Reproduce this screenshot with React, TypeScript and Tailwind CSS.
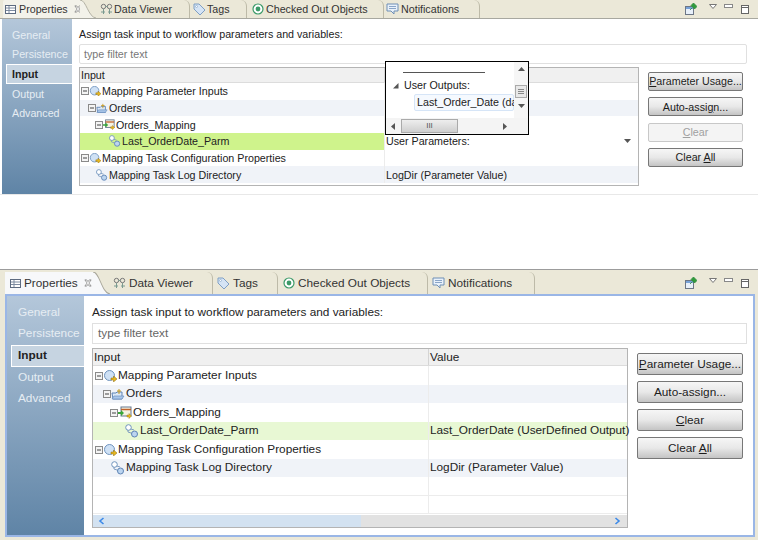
import React from 'react';

const font = { fontFamily: '"Liberation Sans", "Noto Sans", sans-serif' };

// small drawn icons
const Toggle = () => (
  <svg width="8" height="8" viewBox="0 0 8 8" className="flex-shrink-0">
    <rect x="0.5" y="0.5" width="7" height="7" fill="#f4f4f4" stroke="#8a8a8a" />
    <path d="M2 4h4" stroke="#444" />
  </svg>
);

const GroupIcon = () => (
  <svg viewBox="0 0 14 12" className="w-full h-auto">
    <circle cx="6.5" cy="5.5" r="5" fill="#cfe1f5" stroke="#6f93bd" />
    <path d="M8 8h2.5V6l3.5 3-3.5 3v-2H8z" fill="#e8b820" stroke="#8a6a10" strokeWidth="0.5" />
  </svg>
);

const FolderIcon = () => (
  <svg viewBox="0 0 14 12" className="w-full h-auto">
    <path d="M1 5h4l1-1h5v7H2z" fill="#dbe8f7" stroke="#5e84b5" />
    <path d="M8 1v5M6 3h4" stroke="#c79a20" />
    <path d="M3 8h10l-2 3H1z" fill="#a9c6ea" stroke="#5e84b5" strokeWidth="0.6" />
  </svg>
);

const MappingIcon = () => (
  <svg viewBox="0 0 14 13" className="w-full h-auto">
    <rect x="3" y="1" width="10" height="9" fill="#f5f2e0" stroke="#66788f" />
    <path d="M3 3.5h10" stroke="#c0622a" strokeWidth="1.5" />
    <path d="M0 6h3V4l3 3-3 3V8H0z" fill="#3aa63a" />
    <path d="M9 9h2V7.5l2.5 2.5-2.5 2.5V11H9z" fill="#e8b820" stroke="#8a6a10" strokeWidth="0.4" />
  </svg>
);

const ParamIcon = () => (
  <svg viewBox="0 0 15 14" className="w-full h-auto">
    <path d="M4 4v4l6 2M4 4l6 2" fill="none" stroke="#7f9cc0" />
    <circle cx="4.5" cy="3.5" r="2.8" fill="#fff" stroke="#6f93bd" />
    <circle cx="10.5" cy="10" r="3" fill="#bcd5f0" stroke="#5e84b5" />
  </svg>
);

const CloseBox = () => (
  <svg width="8" height="8" viewBox="0 0 9 9" className="flex-shrink-0">
    <path d="M1 1h2l1.5 2L6 1h2L5.5 4.5 8 8H6L4.5 6 3 8H1l2.5-3.5z" fill="#fff" stroke="#777" strokeWidth="0.8" />
  </svg>
);

const TabIcon = ({ name }: { name: string }) => {
  if (name === 'Properties')
    return (
      <svg width="11" height="9" viewBox="0 0 11 9" className="flex-shrink-0">
        <rect x="0.5" y="0.5" width="10" height="8" fill="#fff" stroke="#5d6b80" />
        <path d="M1 3h9M1 5.5h9M4 1v7" stroke="#7d8ba0" />
      </svg>
    );
  if (name === 'Data Viewer')
    return (
      <svg width="13" height="12" viewBox="0 0 13 12" className="flex-shrink-0">
        <circle cx="3.5" cy="3.5" r="2.2" fill="none" stroke="#777" />
        <circle cx="9.5" cy="3.5" r="2.2" fill="none" stroke="#777" />
        <path d="M3.5 6v5M9.5 6v5M5.5 3.5h2M1 9h4M8 9h4" stroke="#7a9a90" />
      </svg>
    );
  if (name === 'Tags')
    return (
      <svg width="13" height="13" viewBox="0 0 13 13" className="flex-shrink-0">
        <path d="M1 1h5l6 6-5 5-6-6z" fill="#d5e4f5" stroke="#7f9fc4" />
        <circle cx="3.5" cy="3.5" r="1" fill="#fff" stroke="#7f9fc4" strokeWidth="0.6" />
      </svg>
    );
  if (name === 'Checked Out Objects')
    return (
      <svg width="12" height="12" viewBox="0 0 12 12" className="flex-shrink-0">
        <circle cx="6" cy="6" r="5" fill="#fff" stroke="#3c9a68" strokeWidth="1.2" />
        <circle cx="6" cy="6" r="2.4" fill="#3c9a68" />
      </svg>
    );
  return (
    <svg width="13" height="13" viewBox="0 0 13 13" className="flex-shrink-0">
      <path d="M1 1h11v7H8v3L5 8H1z" fill="#e9f1fa" stroke="#6f8fb5" />
      <path d="M3 3.5h7M3 5.5h7" stroke="#8aa5c8" />
    </svg>
  );
};

const tabNames = ['Data Viewer', 'Tags', 'Checked Out Objects', 'Notifications'];

const ViewButtons = () => (
  <div className="flex items-center">
    <svg width="12" height="12" viewBox="0 0 12 12">
      <rect x="0.5" y="3.5" width="8" height="8" fill="#e8f0fa" stroke="#6c7686" />
      <path d="M1 5h7" stroke="#5a8ed0" strokeWidth="1.6" />
      <path d="M5 7l2-2M6 2.5l3.5 3.5L12 3.5 8.5 0z" fill="#2f9a3c" stroke="#2f8a3c" strokeWidth="0.8" />
    </svg>
    <svg width="8" height="5" viewBox="0 0 8 5" className="ml-[12px] mb-[6px]">
      <path d="M0.5 0.5h7L4 4.5z" fill="#fff" stroke="#777" />
    </svg>
    <svg width="9" height="4" viewBox="0 0 9 4" className="ml-[7px] mb-[6px]">
      <rect x="0.5" y="0.5" width="8" height="3" fill="#fff" stroke="#888" />
    </svg>
    <svg width="8" height="9" viewBox="0 0 8 9" className="ml-[8px]">
      <rect x="0.5" y="0.5" width="7" height="8" fill="#fff" stroke="#666" />
      <path d="M1 2.5h6" stroke="#666" />
    </svg>
  </div>
);

const TabCurve = ({ w, fill }: { w: string; fill: string }) => (
  <svg viewBox="0 0 20 20" preserveAspectRatio="none" className={`${w} h-full flex-shrink-0`}>
    <path d="M0 0C8 0 10 19 20 20H0z" fill={fill} />
    <path d="M0 0C8 0 10 19 20 20" fill="none" stroke="#a8a69a" />
  </svg>
);

const Btn = ({ label, cls, disabled }: { label: React.ReactNode; cls: string; disabled?: boolean }) => (
  <div
    className={`${cls} flex items-center justify-center whitespace-nowrap border rounded-[2px] ${
      disabled
        ? 'border-[#c8c8c8] bg-[#f4f4f4] text-[#a0a0a0]'
        : 'border-[#777] bg-gradient-to-b from-[#f6f6f6] via-[#e8e8e8] to-[#c4c4c4] text-[#1c1c1c]'
    }`}
  >
    {label}
  </div>
);

type RowData = { label: string; level: number; icon: 'group' | 'folder' | 'map' | 'param'; toggle: boolean; value?: React.ReactNode };

const rows: RowData[] = [
  { label: 'Mapping Parameter Inputs', level: 0, icon: 'group', toggle: true },
  { label: 'Orders', level: 1, icon: 'folder', toggle: true },
  { label: 'Orders_Mapping', level: 2, icon: 'map', toggle: true },
  { label: 'Last_OrderDate_Parm', level: 3, icon: 'param', toggle: false },
  { label: 'Mapping Task Configuration Properties', level: 0, icon: 'group', toggle: true },
  { label: 'Mapping Task Log Directory', level: 2, icon: 'param', toggle: false, value: 'LogDir (Parameter Value)' },
];

const RowIcon = ({ icon }: { icon: RowData['icon'] }) => {
  if (icon === 'group') return <GroupIcon />;
  if (icon === 'folder') return <FolderIcon />;
  if (icon === 'map') return <MappingIcon />;
  return <ParamIcon />;
};

const Tabs = ({ big }: { big: boolean }) => (
  <div className={`flex items-stretch ${big ? 'h-[22px] ml-[5px] mr-[3px]' : 'h-[18px] ml-[3px] mr-[3px]'}`}>
    <div className={`flex items-center text-[#333] flex-shrink-0 ${big ? 'w-[88px] bg-[#f7f8fa] pl-[5px] gap-[3px]' : 'w-[77px] bg-[#f3f2ea] pl-[2px] gap-[3px] rounded-tl-[2px]'}`}>
      <TabIcon name="Properties" />
      <span className={big ? 'mt-[1px]' : ''}>Properties</span>
      <div className={big ? 'ml-[3px]' : 'ml-[3px]'}>
        <CloseBox />
      </div>
    </div>
    <TabCurve w={big ? 'w-[17px]' : 'w-[16px]'} fill={big ? '#f7f8fa' : '#f3f2ea'} />
    {tabNames.map((t, i) => (
      <div
        key={t}
        className={`flex items-center flex-shrink-0 text-[#333] border-r border-[#bdbaa8] rounded-tr-[6px] ${
          big
            ? ['w-[103px] pl-[3px] gap-[3px]', 'w-[65px] pl-[4px] gap-[3px]', 'w-[150px] pl-[5px] gap-[3px]', 'w-[107px] pl-[4px] gap-[3px]'][i]
            : ['w-[94px] pl-[4px] gap-[1px]', 'w-[57px] pl-[3px] gap-[1px]', 'w-[137px] pl-[5px] gap-[2px]', 'w-[96px] pl-[2px] gap-[2px]'][i]
        }`}
      >
        <TabIcon name={t} />
        <span className="mt-[1px]">{t}</span>
      </div>
    ))}
    <div className="flex-1" />
    <ViewButtons />
    <div className="w-[6px]" />
  </div>
);

const Sidebar = ({ big }: { big: boolean }) => (
  <div
    className={`flex flex-col bg-gradient-to-b from-[#b4c7da] to-[#5f84a6] flex-shrink-0 text-[#e6edf3] ${
      big ? 'w-[77px] pt-[6px]' : 'w-[70px] pt-[6px]'
    }`}
  >
    {['General', 'Persistence', 'Input', 'Output', 'Advanced'].map(s =>
      s === 'Input' ? (
        <div
          key={s}
          className={`flex items-center font-bold text-[#222] bg-[#c6d4e1] border-y border-l border-white ${
            big ? 'h-[22px] ml-[4px] pl-[6px]' : 'h-[20px] ml-[4px] pl-[5px]'
          }`}
        >
          {s}
        </div>
      ) : (
        <div key={s} className={`flex items-center ${big ? 'h-[21.5px] pl-[11px]' : 'h-[19.5px] pl-[10px]'}`}>
          {s}
        </div>
      ),
    )}
  </div>
);

const Tree = ({ big, highlight, value, extra, children }: { big: boolean; highlight: string; value: React.ReactNode; extra?: boolean; children?: React.ReactNode }) => {
  const rowH = big ? 'h-[18.5px]' : 'h-[16.7px]';
  const col = big ? 'w-[336px]' : 'w-[305px]';
  const indent = big ? ['pl-[2px]', 'pl-[10px]', 'pl-[17px]', 'pl-[31px]'] : ['pl-[1px]', 'pl-[8px]', 'pl-[15px]', 'pl-[28px]'];
  const shown = extra ? [...rows, null, null] : rows;
  const nudge = big ? 'pt-[1px]' : '';
  return (
    <div className={`relative border border-[#b4b4b4] flex flex-col bg-white ${big ? '' : 'pb-[2px]'}`}>
      <div className={`flex bg-[#f0f0f0] border-b border-[#dcdcdc] text-[#222] ${big ? 'h-[17px]' : 'h-[15px]'}`}>
        <div className={`${col} ${nudge} pl-[1px] flex items-center border-r border-[#d4d4d4]`}>Input</div>
        <div className={`${nudge} flex-1 pl-[1px] flex items-center`}>Value</div>
      </div>
      {shown.map((r, i) => {
        const bg = i === 3 ? highlight : i === 1 || i === 5 ? 'bg-[#f0f3f8]' : 'bg-white';
        return (
          <div key={i} className={`flex ${rowH} ${bg} ${i > 5 ? 'border-b border-[#ececec]' : ''} text-[#222]`}>
            <div className={`${col} ${nudge} flex-shrink-0 flex items-center overflow-hidden whitespace-nowrap border-r border-[#ececec] ${r ? indent[r.level] : ''}`}>
              {r && (
                <>
                  {r.toggle && <Toggle />}
                  <div className={`flex-shrink-0 ${r.icon === 'param' ? (big ? 'w-[15px]' : 'w-[13px]') : big ? 'w-[14px]' : 'w-[12px]'}`}>
                    <RowIcon icon={r.icon} />
                  </div>
                  <span className="ml-[1px]">{r.label}</span>
                </>
              )}
            </div>
            <div className={`${nudge} flex-1 pl-[1px] flex items-center whitespace-nowrap ${i === 3 && !big ? 'bg-white' : ''}`}>
              {r ? (i === 3 ? value : r.value) : null}
            </div>
          </div>
        );
      })}
      {extra && (
        <div className="h-[12px] flex bg-[#e2e2e2] mt-[1px]">
          <div className="w-[268px] bg-[#d3e2f1] flex items-center pl-[5px]">
            <svg width="7" height="8" viewBox="0 0 7 8"><path d="M5.5 1L2 4l3.5 3" fill="none" stroke="#3d8ae8" strokeWidth="1.6" /></svg>
          </div>
          <div className="flex-1 flex items-center justify-end pr-[6px]">
            <svg width="7" height="8" viewBox="0 0 7 8"><path d="M1.5 1L5 4 1.5 7" fill="none" stroke="#3d8ae8" strokeWidth="1.6" /></svg>
          </div>
        </div>
      )}
      {children}
    </div>
  );
};

const U = ({ children }: { children: React.ReactNode }) => <span className="underline">{children}</span>;

const PopupList = () => (
  <div className="absolute left-[305px] top-[-7px] w-[144px] h-[74px] border border-black bg-white flex flex-col z-10">
    <div className="flex flex-1 min-h-0">
      <div className="flex-1 min-w-0 whitespace-nowrap text-[#222]">
        <div className="h-[11px] ml-[17px] w-[82px] border-b border-[#555]" />
        <div className="flex items-center h-[17px] mt-[4px] pl-[7px] gap-[5px]">
          <svg width="6" height="6" viewBox="0 0 6 6"><path d="M0 5.5L5.5 0v5.5z" fill="#555" /></svg>
          <span>User Outputs:</span>
        </div>
        <div className="ml-[28px] h-[17px] pl-[2px] flex items-center bg-[#f5f9fe] border border-[#d6e5f7] rounded-[2px]">
          <span>Last_Order_Date (da</span>
        </div>
      </div>
      <div className="w-[14px] flex-shrink-0 flex flex-col items-center bg-[#f6f6f6] pt-[5px]">
        <svg width="7" height="4" viewBox="0 0 7 4"><path d="M0 4L3.5 0 7 4z" fill="#555" /></svg>
        <div className="w-[12px] h-[13px] mt-[14px] bg-[#e8e8e8] border border-[#aaa] flex flex-col justify-center gap-[1px] px-[2px]">
          <div className="h-[1px] bg-[#888]" />
          <div className="h-[1px] bg-[#888]" />
          <div className="h-[1px] bg-[#888]" />
        </div>
        <svg width="7" height="4" viewBox="0 0 7 4" className="mt-[6px]"><path d="M0 0h7L3.5 4z" fill="#555" /></svg>
      </div>
    </div>
    <div className="h-[16px] flex items-center bg-[#f4f4f4] pl-[5px]">
      <svg width="4" height="7" viewBox="0 0 4 7"><path d="M4 0v7L0 3.5z" fill="#555" /></svg>
      <div className="w-[57px] h-[14px] ml-[6px] bg-gradient-to-b from-[#eee] to-[#cfcfcf] border border-[#aaa] flex items-center justify-center text-[8px] text-[#555]">III</div>
      <svg width="4" height="7" viewBox="0 0 4 7" className="ml-[45px]"><path d="M0 0v7l4-3.5z" fill="#555" /></svg>
    </div>
  </div>
);

export default function App() {
  return (
    <div className="w-[758px] h-[540px] bg-white overflow-hidden flex flex-col" style={font}>
      {/* while the value is being picked */}
      <div className="h-[195px] flex flex-col flex-shrink-0 text-[10.7px]">
        <div className="bg-[#ebe8d8] border-b border-[#a8a8a0]">
          <Tabs big={false} />
        </div>
        <div className="flex flex-1 min-h-0 pl-[2px] pr-[11px] border-b border-[#e8e8e8]">
          <Sidebar big={false} />
          <div className="flex-1 pl-[7px] pt-[6px] flex">
            <div className="flex-1 flex flex-col">
              <div className="h-[18px] flex items-center text-[#222]">Assign task input to workflow parameters and variables:</div>
              <div className="h-[20px] w-[668px] mt-[1px] border border-[#e0e0e0] rounded-[2px] flex items-center pl-[4px] text-[#777]">type filter text</div>
              <div className="flex mt-[3px]">
                <div className="w-[560px]">
                  <Tree
                    big={false}
                    highlight="bg-[#cff38c]"
                    value={
                      <div className="flex-1 flex items-center justify-between pr-[7px]">
                        <span>User Parameters:</span>
                        <svg width="7" height="4" viewBox="0 0 7 4"><path d="M0 0h7L3.5 4z" fill="#555" /></svg>
                      </div>
                    }
                  >
                    <PopupList />
                  </Tree>
                </div>
                <div className="ml-[9px] mt-[5px] flex flex-col gap-[6.3px]">
                  <Btn cls="w-[95px] h-[19px]" label={<span><U>P</U>arameter Usage...</span>} />
                  <Btn cls="w-[95px] h-[19px]" label={<span>Auto-assi<U>g</U>n...</span>} />
                  <Btn cls="w-[95px] h-[19px]" disabled label={<span><U>C</U>lear</span>} />
                  <Btn cls="w-[95px] h-[19px]" label={<span>Clear <U>A</U>ll</span>} />
                </div>
              </div>
            </div>
          </div>
        </div>
      </div>

      {/* after the value is assigned */}
      <div className="mt-[74px] flex flex-col flex-1 min-h-0 bg-[#ebe8d8] border-t border-[#9c9c9c] text-[11.8px]">
        <div className="pt-[2px]">
          <Tabs big />
        </div>
        <div className="flex flex-1 min-h-0 ml-[5px] mr-[3px] mb-[3px] border-2 border-[#9ab6e6] bg-white">
          <Sidebar big />
          <div className="flex-1 pl-[8px] pt-[7px] flex flex-col">
            <div className="h-[18px] pt-[1px] flex items-center text-[#222]">Assign task input to workflow parameters and variables:</div>
            <div className="h-[21px] w-[655px] mt-[2px] pt-[1px] border border-[#e0e0e0] flex items-center pl-[5px] text-[#666]">type filter text</div>
            <div className="flex mt-[4px]">
              <div className="w-[536px]">
                <Tree big extra highlight="bg-[#e8f8d4]" value="Last_OrderDate (UserDefined Output)" />
              </div>
              <div className="ml-[9px] mt-[5px] flex flex-col gap-[6px]">
                <Btn cls="w-[106px] h-[22px] pt-[1px]" label={<span><U>P</U>arameter Usage...</span>} />
                <Btn cls="w-[106px] h-[22px] pt-[1px]" label={<span>Auto-assi<U>g</U>n...</span>} />
                <Btn cls="w-[106px] h-[22px] pt-[1px]" label={<span><U>C</U>lear</span>} />
                <Btn cls="w-[106px] h-[22px] pt-[1px]" label={<span>Clear <U>A</U>ll</span>} />
              </div>
            </div>
          </div>
        </div>
      </div>
    </div>
  );
}
